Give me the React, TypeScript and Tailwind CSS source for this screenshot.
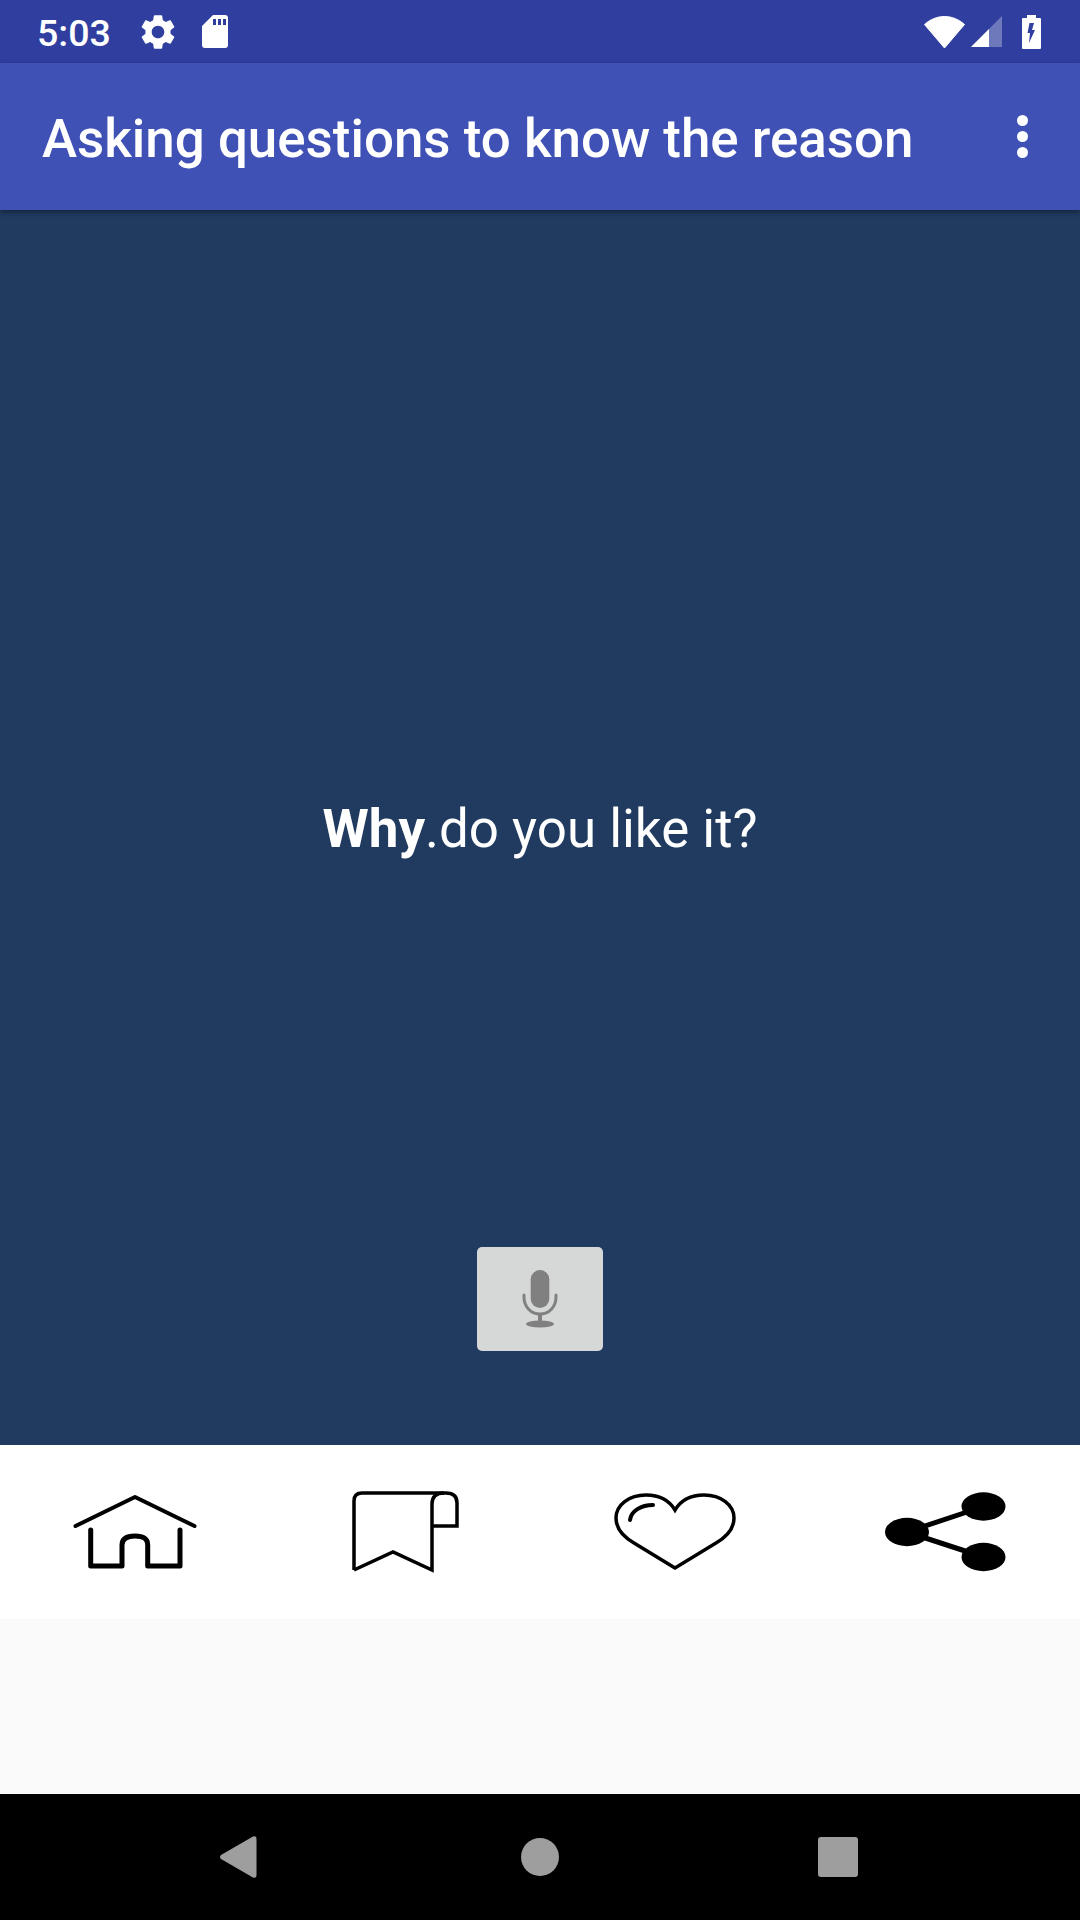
export default function App() {
  return (
    <div className="flex h-[1920px] w-[1080px] flex-col overflow-hidden bg-[#fafafa] font-['Roboto',sans-serif]">
      {/* status bar */}
      <div className="flex h-[63px] shrink-0 items-center bg-[#303f9f] text-white">
        <span className="ml-[37px] w-[100px] pt-[5px] text-[37.5px] leading-none font-medium">5:03</span>
        <svg className="h-[42px] w-[42px]" viewBox="0 0 24 24" fill="#fff">
          <path d="M19.14 12.94c.04-.3.06-.61.06-.94 0-.32-.02-.64-.07-.94l2.03-1.58c.18-.14.23-.41.12-.61l-1.92-3.32c-.12-.22-.37-.29-.59-.22l-2.39.96c-.5-.38-1.03-.7-1.62-.94l-.36-2.54c-.04-.24-.24-.41-.48-.41h-3.84c-.24 0-.43.17-.47.41l-.36 2.54c-.59.24-1.13.57-1.62.94l-2.39-.96c-.22-.08-.47 0-.59.22L2.74 8.87c-.12.21-.08.47.12.61l2.03 1.58c-.05.3-.09.63-.09.94s.02.64.07.94l-2.03 1.58c-.18.14-.23.41-.12.61l1.92 3.32c.12.22.37.29.59.22l2.39-.96c.5.38 1.03.7 1.62.94l.36 2.54c.05.24.24.41.48.41h3.84c.24 0 .44-.17.47-.41l.36-2.54c.59-.24 1.13-.56 1.62-.94l2.39.96c.22.08.47 0 .59-.22l1.92-3.32c.12-.22.07-.47-.12-.61l-2.01-1.58zM12 15.6c-1.98 0-3.6-1.62-3.6-3.6s1.62-3.6 3.6-3.6 3.6 1.62 3.6 3.6-1.62 3.6-3.6 3.6z" />
        </svg>
        <svg className="ml-[23px] h-[33px] w-[26px]" viewBox="0 0 26 33" fill="#fff">
          <path fillRule="evenodd" d="M11 0H23a3 3 0 0 1 3 3V30a3 3 0 0 1-3 3H3a3 3 0 0 1-3-3V11ZM11 4V10H14V4ZM16 4V10H19V4ZM21 4V10H24V4Z" />
        </svg>
        <div className="flex-1" />
        <svg className="h-[32px] w-[41px]" viewBox="0 0 41 32" fill="#fff">
          <path d="M20.5 32 0.5 8.5C6 3.5 13 0.5 20.5 0.5S35 3.5 40.5 8.5Z" strokeLinejoin="round" stroke="#fff" strokeWidth="1" />
        </svg>
        <svg className="ml-[6px] h-[31px] w-[31px]" viewBox="0 0 31 31">
          <path d="M31 0V31H0Z" fill="#fff" fillOpacity="0.3" />
          <path d="M18 13V31H0Z" fill="#fff" />
        </svg>
        <svg className="ml-[20px] mr-[39px] h-[34px] w-[19px]" viewBox="0 0 19 34">
          <path fill="#fff" fillRule="evenodd" d="M5 0H14V3H18a1 1 0 0 1 1 1V33a1 1 0 0 1-1 1H1a1 1 0 0 1-1-1V4a1 1 0 0 1 1-1H5ZM7 28 13 15H10L12 8H7.500L5.500 18H8Z" />
        </svg>
      </div>

      {/* app bar */}
      <div className="z-10 flex h-[147px] shrink-0 items-center justify-between bg-[#3f51b5] pl-[42px] pr-[52px] shadow-[0_2px_5px_rgba(0,0,0,0.4)]">
        <span className="pt-[5px] text-[52.9px] leading-none font-medium text-white">Asking questions to know the reason</span>
        <div className="flex flex-col gap-[5px]">
          <div className="h-[11px] w-[11px] rounded-full bg-white" />
          <div className="h-[11px] w-[11px] rounded-full bg-white" />
          <div className="h-[11px] w-[11px] rounded-full bg-white" />
        </div>
      </div>

      {/* question */}
      <div className="flex h-[1235px] shrink-0 flex-col items-center bg-[#203a60] pb-[94px] pt-[201px]">
        <div className="flex flex-1 items-center justify-center">
          <p className="text-[52.9px] leading-none text-white">
            <span className="font-bold">Why</span>.do you like it?
          </p>
        </div>
        <button className="flex h-[104px] w-[126px] items-center justify-center rounded-[5px] bg-[#d6d7d7]">
          <svg className="h-[60px] w-[40px]" viewBox="0 0 40 60" fill="none">
            <rect x="10.700" y="1" width="18.600" height="38" rx="9.300" fill="#808080" />
            <path d="M4 26V28C4 38 11 45 20 45S36 38 36 28V26" stroke="#808080" strokeWidth="3" strokeLinecap="round" />
            <rect x="18" y="44" width="4" height="10" fill="#808080" />
            <ellipse cx="20" cy="55" rx="14" ry="3.500" fill="#808080" />
          </svg>
        </button>
      </div>

      {/* bottom icons */}
      <div className="grid h-[174px] shrink-0 grid-cols-4 place-items-center bg-white">
        <svg className="h-[90px] w-[130px]" viewBox="0 0 130 90" fill="none" stroke="#000" strokeLinecap="round" strokeLinejoin="round">
          <path d="M5.500 39 65 10 124.500 39" strokeWidth="4" />
          <path d="M20.700 43V79H52V58Q52 49 65 49T77.700 58V79H110V43" strokeWidth="5" />
        </svg>
        <svg className="h-[90px] w-[130px]" viewBox="0 0 130 90" fill="none" stroke="#000" strokeWidth="3.500">
          <path d="M14 83V14Q14 6 22 6H106Q117 6 117 16V39H92" />
          <path d="M14 83 53 65 92 83V17Q92 6 104 6" />
        </svg>
        <svg className="h-[90px] w-[130px]" viewBox="0 0 130 90" fill="none" stroke="#000" strokeWidth="3.500">
          <path d="M65 81 24 56C12 49 6 41 6 31 6 18 19 8 36 8 48 8 59 13 65 23 71 13 82 8 94 8 111 8 124 18 124 31 124 41 118 49 106 56Z" />
          <path d="M20 33C21 24 31 18 43 18" strokeWidth="4" strokeLinecap="round" />
        </svg>
        <svg className="h-[90px] w-[130px]" viewBox="0 0 130 90" fill="#000">
          <path d="M27 45 103.500 19.500M27 45 103.500 70" stroke="#000" strokeWidth="5" />
          <ellipse cx="27" cy="45" rx="22" ry="14.200" />
          <ellipse cx="103.500" cy="19.500" rx="22" ry="14.200" />
          <ellipse cx="103.500" cy="70" rx="22" ry="14.200" />
        </svg>
      </div>

      <div className="flex-1" />

      {/* navigation bar */}
      <div className="flex h-[126px] shrink-0 items-center bg-black pl-[219px]">
        <svg className="h-[42px] w-[38px]" viewBox="0 0 37 42" fill="#9e9e9e">
          <path d="M33.500 0.500Q37 -0.500 37 3V39Q37 42.500 33.500 41.500L1.500 23Q-0.500 21 1.500 19Z" />
        </svg>
        <div className="ml-[264px] h-[38px] w-[38px] rounded-full bg-[#9e9e9e]" />
        <div className="ml-[259px] h-[40px] w-[40px] rounded-[3px] bg-[#9e9e9e]" />
      </div>
    </div>
  );
}
